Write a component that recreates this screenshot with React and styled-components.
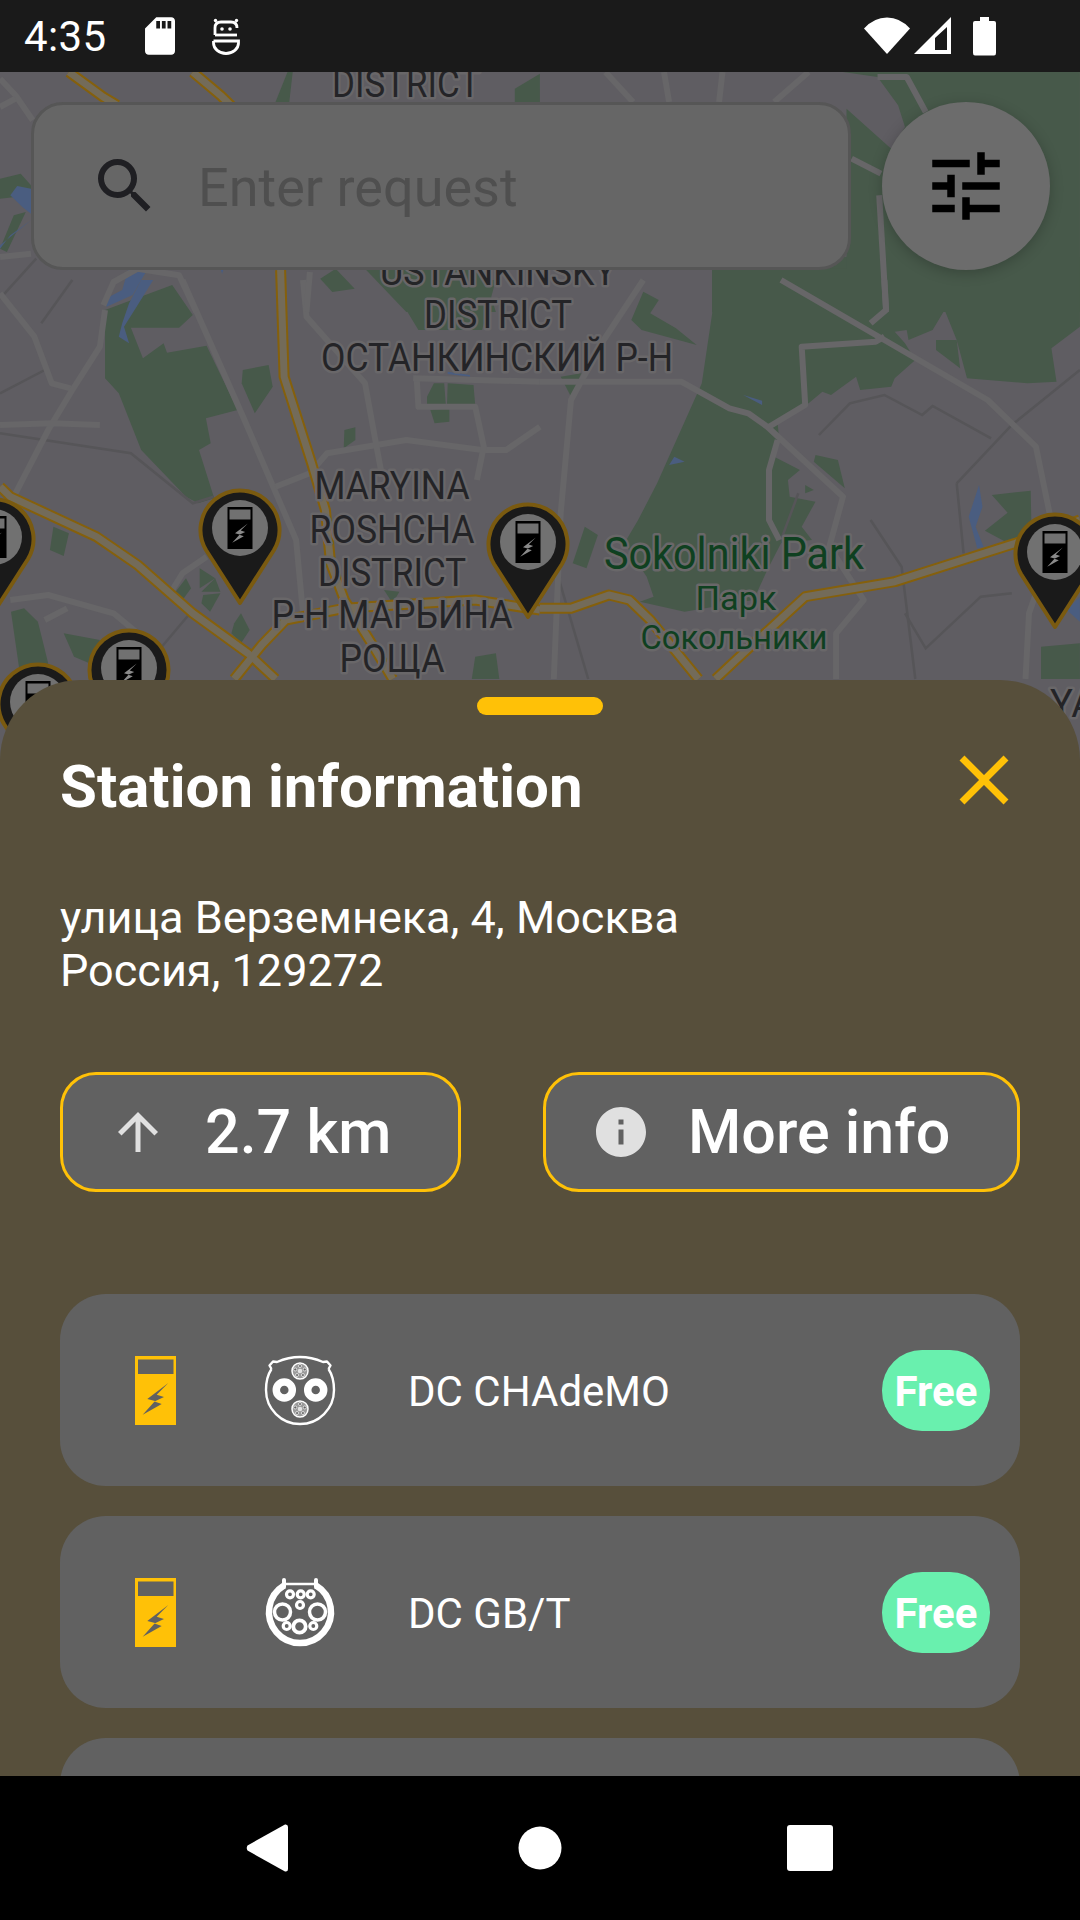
import React from 'react';
import styled, { createGlobalStyle } from 'styled-components';

const Global = createGlobalStyle`
  html, body { margin: 0; padding: 0; background: #000; }
  * { box-sizing: border-box; }
`;

const Screen = styled.div`
  width: 1080px; height: 1920px; display: flex; flex-direction: column; overflow: hidden;
  font-family: Roboto, sans-serif; color: #fff;
`;
const StatusBar = styled.div`
  height: 72px; flex: none; background: #1a1a1a; display: flex; align-items: center; justify-content: space-between;
  padding: 0 84px 0 24px;
`;
const StatusGroup = styled.div`display: flex; align-items: center; gap: ${p => p.$gap}px;`;
const Clock = styled.span`font-size: 42px; line-height: 72px; letter-spacing: 0.4px; margin-right: 10px; position: relative; top: 1px;`;

const Stage = styled.div`
  flex: 1; position: relative; display: flex; flex-direction: column; justify-content: space-between; overflow: hidden;
`;
const MapCanvas = styled.svg`position: absolute; left: 0; top: 0; width: 1080px; height: 720px; display: block;`;
const MapLabel = styled.text.attrs(p => ({ textLength: p.$len, lengthAdjust: 'spacingAndGlyphs' }))`
  font-family: Roboto, sans-serif; font-size: ${p => p.$size}px; fill: ${p => p.$fill};
  text-anchor: middle; stroke: #696769; stroke-width: 5px; paint-order: stroke; stroke-linejoin: round;
`;
const TopRow = styled.div`
  position: relative; display: flex; align-items: flex-start; gap: 32px; padding: 30px 30px 0 31px;
`;
const SearchBar = styled.div`
  width: 820px; height: 168px; background: #666; border: 3px solid #565656; border-radius: 32px;
  display: flex; align-items: center; padding-left: 55px; gap: 37px; flex: none;
`;
const Placeholder = styled.span`font-size: 54px; color: #4f4f4f; position: relative; top: 1px;`;
const FilterButton = styled.div`
  width: 168px; height: 168px; border-radius: 50%; background: #6c6c6c; flex: none; margin-left: -1px;
  display: flex; align-items: center; justify-content: center; box-shadow: 0 3px 14px rgba(0,0,0,.22);
`;

const Sheet = styled.div`
  position: relative; height: 1096px; background: #574f3b; border-radius: 80px 80px 0 0; padding: 17px 60px 0; overflow: hidden; flex: none;
`;
const Handle = styled.div`width: 126px; height: 18px; border-radius: 9px; background: #ffc107; margin: 0 auto;`;
const SheetHead = styled.div`display: flex; justify-content: space-between; align-items: flex-start; margin-top: 30px;`;
const Title = styled.h2`margin: 0; font-size: 60px; font-weight: 700; line-height: 84px; letter-spacing: 0;`;
const CloseIcon = styled.svg`width: 58px; height: 58px; margin: 6px 7px 0 0; display: block;`;
const Address = styled.p`margin: 62px 0 0; font-size: 45px; line-height: 53px;`;
const ActionRow = styled.div`display: flex; justify-content: space-between; margin-top: 75px;`;
const ActionButton = styled.div`
  width: ${p => p.$w}px; height: 120px; border: 3px solid #ffc107; border-radius: 36px; background: #616161;
  display: flex; align-items: center; padding-left: 45px; gap: 37px;
  font-size: 61px; font-weight: 500;
`;
const ButtonIcon = styled.svg`width: 60px; height: 60px; fill: #e0e0e0; flex: none; display: block;`;
const Cards = styled.div`display: flex; flex-direction: column; gap: 30px; margin-top: 102px;`;
const Card = styled.div`
  height: 192px; flex: none; border-radius: 46px; background: #616161; display: flex; align-items: center; padding: 0 30px 0 75px;
`;
const Station = styled.svg`width: 41px; height: 69px; flex: none; display: block;`;
const Plug = styled.svg`width: 70px; height: 70px; flex: none; margin: 0 74px 0 89px; display: block; overflow: visible;`;
const CardName = styled.span`flex: 1; font-size: 42px; margin-left: -1px; position: relative; top: 1px;`;
const FreeBadge = styled.span`
  width: 108px; height: 81px; border-radius: 40px; background: #69f0ae; display: flex; align-items: center; justify-content: center;
  font-size: 42px; font-weight: 700; padding-top: 2px;
`;
const NavBar = styled.div`height: 144px; flex: none; background: #000; display: flex; align-items: center;`;
const NavIcon = styled.svg`width: ${p => p.$w}px; height: 48px; margin-left: ${p => p.$ml}px; fill: #fff; display: block;`;

const z2 = pts => 'M' + pts.map(([x, y]) => `${(x / 2.904).toFixed(1)} ${(280 + y / 3 - 72).toFixed(1)}`).join('L');
const z3 = pts => 'M' + pts.map(([x, y]) => `${(540 + x / 2.904).toFixed(1)} ${(280 + y / 3 - 72).toFixed(1)}`).join('L');
const zl = pts => 'M' + pts.map(([x, y]) => `${(x / 2.904).toFixed(1)} ${(y / 3).toFixed(1)}`).join('L');
const zr = pts => 'M' + pts.map(([x, y]) => `${(540 + x / 2.904).toFixed(1)} ${(y / 3).toFixed(1)}`).join('L');

const parks = [
  z2([[305,90],[500,15],[560,105],[520,143],[380,143],[415,235],[475,190],[485,218],[600,197],[690,390],[598,415],[612,490],[578,510],[622,655],[575,670],[540,650],[410,510],[345,340],[305,295]]),
  z2([[705,270],[780,255],[792,320],[740,400],[702,310]]),
  zl([[930,620],[975,590],[1030,650],[965,660]]),
  zl([[1060,590],[1400,590],[1440,720],[1180,720]]),
  z2([[1180,90],[1100,0],[1440,0],[1400,150],[1215,150]]),
  z2([[1240,350],[1260,310],[1290,310],[1295,378],[1240,375]]),
  z2([[1300,310],[1375,315],[1380,375],[1298,375]]),
  z2([[1250,390],[1305,385],[1305,425],[1262,430]]),
  z2([[1000,450],[1032,442],[1032,480],[998,505]]),
  z2([[145,810],[155,740],[200,760],[185,828]]),
  z2([[32,995],[70,985],[110,1025],[140,1150],[100,1197],[60,1197]]),
  z2([[185,1060],[290,1080],[260,1150],[215,1130]]),
  z2([[580,865],[625,895],[580,925]]),
  z2([[625,895],[640,935],[585,935]]),
  z2([[590,945],[640,940],[610,995],[585,970]]),
  z2([[510,935],[540,895],[555,925],[530,960]]),
  z2([[700,1000],[725,1050],[700,1090],[672,1060],[680,1030]]),
  z2([[1115,930],[1160,935],[1140,970]]),
  z2([[1380,1130],[1440,1120],[1450,1197],[1370,1197]]),
  zl([[0,320],[60,305],[90,340],[90,370],[0,380]]),
  zl([[40,430],[75,420],[20,540],[0,530]]),
  zl([[800,90],[835,0],[850,0],[840,90]]),
  zl([[1495,50],[1568,5],[1568,90],[1495,90]]),
  z3([[500,-20],[500,100],[470,310],[340,610],[285,720],[245,790],[310,890],[330,950],[290,965],[420,995],[620,960],[660,870],[700,790],[670,720],[665,570],[695,480],[690,430],[780,370],[820,335],[845,345],[918,290],[930,330],[1020,320],[1030,295],[1090,240],[1060,190],[1030,155],[1065,150],[1070,180],[1140,150],[1175,90],[1210,180],[1240,295],[1415,310],[1500,305],[1485,205],[1568,140],[1568,-70],[500,-70]]),
  zr([[500,720],[500,590],[890,590],[890,110],[1020,230],[1060,165],[1040,100],[980,15],[880,0],[1568,0],[1568,720]]),
  z3([[680,530],[755,570],[720,600],[725,650],[800,665],[760,740],[790,780],[700,790],[670,720],[665,570]]),
  z3([[800,525],[865,540],[885,625],[795,545]]),
  z3([[1150,180],[1210,180],[1220,265],[1150,210]]),
  z3([[300,35],[345,60],[320,100],[395,145],[455,195],[295,150],[265,120]]),
  z3([[60,290],[120,280],[90,350]]),
  z3([[130,740],[168,765],[135,865],[95,850]]),
  z3([[770,615],[795,630],[770,640]]),
  z3([[1312,645],[1425,632],[1428,785],[1360,790],[1292,752],[1358,698]]),
  z3([[1455,1100],[1568,1090],[1568,1197],[1455,1197]]),
];
const water = [
  zl([[30,370],[50,342],[90,350],[90,425],[65,405]]),
  zl([[0,520],[90,445],[30,490],[0,530]]),
  z2([[310,80],[385,45],[410,0],[445,-60],[380,-60],[355,30],[300,60]]),
  z2([[410,0],[445,0],[400,75],[360,140],[375,190],[345,170],[355,130],[375,70]]),
  z2([[1300,275],[1365,285],[1365,290],[1300,282]]),
  z3([[590,345],[645,362],[645,375]]),
  z3([[375,555],[390,530],[420,545]]),
  z3([[1275,615],[1285,680],[1265,740],[1288,800],[1270,805],[1245,710]]),
  z3([[1530,990],[1568,950],[1568,1025]]),
  zl([[640,590],[650,590],[645,605]]),
];
const roads = [
  z2([[0,40],[100,170],[150,310],[205,325]]),
  z2([[305,90],[290,200],[210,330],[140,450],[40,650]]),
  z2([[0,435],[150,430],[290,435]]),
  z2([[530,0],[710,420],[860,780],[880,1000]]),
  z2([[800,620],[900,580],[950,520],[1180,480],[1400,510],[1470,510],[1568,440]]),
  z2([[880,0],[890,110],[1060,310],[1090,480],[1110,590]]),
  z2([[1210,295],[1215,380],[1380,380],[1405,500],[1385,600]]),
  z2([[1200,295],[1568,305]]),
  z3([[0,305],[410,305],[550,385],[605,400],[660,440],[880,650],[840,800],[940,960],[860,1060],[860,1197]]),
  z3([[300,0],[185,180],[90,360],[60,700],[40,1197]]),
  z3([[700,0],[1300,360],[1440,500],[1480,700],[1495,780],[1420,1000],[1410,1197]]),
  z3([[665,440],[770,375],[760,200],[975,185],[1000,170]]),
  z3([[690,480],[665,570],[665,720],[695,780]]),
  z2([[30,960],[140,945],[330,1000],[400,1060]]),
  z2([[130,1020],[195,985]]),
  z2([[500,930],[530,880],[600,830]]),
  zl([[0,20],[45,70],[95,145]]),
  zl([[0,105],[45,80]]),
  zl([[0,555],[90,545]]),
  zl([[300,700],[330,630],[400,590],[520,610],[570,720]]),
  zr([[190,0],[270,90]]),
  zr([[360,0],[375,90]]),
  zr([[530,0],[520,90]]),
  zr([[780,0],[680,90]]),
  zr([[980,15],[1065,15],[1120,120]]),
  zr([[905,260],[990,305]]),
  zr([[985,370],[1005,720]]),
  z3([[1000,0],[1005,90],[960,130]]),
  zl([[900,600],[890,720]]),
];
const thin = [
  z2([[0,460],[380,520],[560,670],[620,650]]),
  z2([[0,340],[130,270]]),
  z2([[120,130],[210,0]]),
  z2([[470,1100],[560,990]]),
  z3([[810,465],[900,370],[1000,345],[1110,405],[1140,378],[1310,475]]),
  z3([[1210,610],[1370,435],[1568,270]]),
  z3([[960,720],[1050,860],[1090,1197]]),
  z3([[1210,610],[1230,820]]),
  z3([[50,880],[140,1197]]),
  z3([[750,640],[700,780]]),
  z3([[1060,1000],[1120,1105],[1280,950],[1370,940]]),
  zl([[0,680],[105,560]]),
];
const highways = [
  z2([[815,-30],[825,290],[905,550],[945,690],[960,850],[1000,960],[1085,1100],[1140,1197]]),
  zl([[200,0],[300,75],[340,100]]),
  zl([[560,0],[640,70],[680,110]]),
  z2([[0,620],[30,650],[280,770],[400,855],[560,1000],[720,1120],[800,1197]]),
  z2([[680,1197],[760,1095],[830,1020],[1000,985],[1380,960],[1568,990]]),
  z3([[0,985],[90,985],[200,945],[260,960],[320,1020],[460,1197]]),
  z3([[510,1197],[590,1120],[770,950],[1030,905],[1380,790],[1568,720]]),
];

const labels = [
  [406, 25, 38, 148, 'DISTRICT'],
  [498, 213, 38, 236, 'USTANKINSKY'],
  [498, 256, 38, 148, 'DISTRICT'],
  [497, 299, 38, 352, 'ОСТАНКИНСКИЙ Р-Н'],
  [392, 427, 38, 155, 'MARYINA'],
  [392, 471, 38, 165, 'ROSHCHA'],
  [392, 514, 38, 148, 'DISTRICT'],
  [392, 556, 38, 241, 'Р-Н МАРЬИНА'],
  [392, 600, 38, 105, 'РОЩА'],
];

const BOLT = 'M33.3 27L12.3 43L20 45L7.7 58.7L26.7 48L19.5 45.5L29 41L21.7 38.7Z';

const Pin = ({ x, y }) => (
  <g transform={`translate(${x} ${y})`}>
    <path d="M0 114L-34 61A39.500 39.500 0 1 1 34 61Z" fill="#1a1a1a" stroke="#7a5a10" strokeWidth="4" strokeLinejoin="round" />
    <circle cx="0" cy="39" r="28" fill="#717171" />
    <g transform="translate(-12.5 18)">
      <rect width="25" height="42" fill="#000" />
      <rect x="2" y="2.5" width="21" height="10" fill="#717171" />
      <g transform="scale(.61)">
        <path d={BOLT} fill="#8a8a8a" />
      </g>
    </g>
  </g>
);

const MapBackground = () => (
  <MapCanvas viewBox="0 0 1080 720">
    <rect width="1080" height="720" fill="#5f5d62" />
    {parks.map((d, i) => <path key={i} d={d} fill="#47594a" />)}
    {water.map((d, i) => <path key={i} d={d} fill="#4a5d80" />)}
    {thin.map((d, i) => <path key={i} d={d} fill="none" stroke="#565558" strokeWidth="2.5" />)}
    {roads.map((d, i) => <path key={i} d={d} fill="none" stroke="#676668" strokeWidth="6" strokeLinejoin="round" />)}
    {highways.map((d, i) => <path key={i} d={d} fill="none" stroke="#85600c" strokeWidth="11" strokeLinejoin="round" />)}
    {highways.map((d, i) => <path key={i} d={d} fill="none" stroke="#736b59" strokeWidth="7" strokeLinejoin="round" />)}
    {labels.map(([x, y, size, len, text]) => (
      <MapLabel key={`${text}${y}`} x={x} y={y} $size={size} $len={len} $fill="#242427">{text}</MapLabel>
    ))}
    <MapLabel x="734" y="497" $size={44} $len={260} $fill="#0f4020">Sokolniki Park</MapLabel>
    <MapLabel x="736" y="538" $size={34} $len={81} $fill="#0f4020">Парк</MapLabel>
    <MapLabel x="734" y="577" $size={34} $len={187} $fill="#0f4020">Сокольники</MapLabel>
    <MapLabel x="1073" y="645" $size={38} $len={46} $fill="#242427">YA</MapLabel>
    <Pin x={240} y={417} />
    <Pin x={528} y={431} />
    <Pin x={1055} y={441} />
    <Pin x={-6} y={426} />
    <Pin x={129} y={557} />
    <Pin x={38} y={591} />
  </MapCanvas>
);

const StationIcon = () => (
  <Station viewBox="0 0 41 69">
    <rect width="41" height="69" fill="#ffc107" />
    <rect x="3" y="3.5" width="35.5" height="14.5" fill="#616161" />
    <path d={BOLT} fill="#616161" />
  </Station>
);

const Chademo = () => (
  <Plug viewBox="0 0 70 70">
    <path d="M6.500 14C2.500 20 1 27 1 35A34 34 0 0 0 69 35C69 27 67.500 20 63.500 14" fill="none" stroke="#fff" strokeWidth="2.400" />
    <path d="M6.500 14L4.500 10.500L8 6.500L12 7Q35 -3 58 7L62 6.500L65.500 10.500L63.500 14" fill="none" stroke="#fff" strokeWidth="2.400" strokeLinejoin="round" />
    <circle cx="19.300" cy="35" r="8" fill="none" stroke="#fff" strokeWidth="7.500" />
    <circle cx="50.700" cy="35" r="8" fill="none" stroke="#fff" strokeWidth="7.500" />
    {[16, 54].map(cy => (
      <g key={cy}>
        <circle cx="35" cy={cy} r="8" fill="#9a9a9a" stroke="#fff" strokeWidth="1.500" />
        {[0, 72, 144, 216, 288].map(a => (
          <circle key={a} cx={35 + 5 * Math.sin(a * Math.PI / 180)} cy={cy - 5 * Math.cos(a * Math.PI / 180)} r="1.500" fill="#616161" stroke="#fff" strokeWidth=".7" />
        ))}
        <circle cx="35" cy={cy} r="2.300" fill="#e4e4e4" />
      </g>
    ))}
  </Plug>
);

const GbT = () => (
  <Plug viewBox="0 0 70 70">
    <path d="M19 8.500A31 31 0 1 0 51 8.500" fill="none" stroke="#fff" strokeWidth="6.500" />
    <path d="M19 10L19 3M51 10L51 3" stroke="#fff" strokeWidth="4" strokeLinecap="round" />
    <path d="M19 7H51" stroke="#fff" strokeWidth="2.500" />
    <circle cx="17.500" cy="35" r="8" fill="none" stroke="#fff" strokeWidth="3.500" />
    <circle cx="52.500" cy="35" r="8" fill="none" stroke="#fff" strokeWidth="3.500" />
    <circle cx="34.500" cy="49.500" r="6.200" fill="none" stroke="#fff" strokeWidth="3.800" />
    {[[25, 17.300], [35.700, 17.300], [45.700, 17.300], [35, 28], [21.700, 49], [48.300, 49]].map(([cx, cy]) => (
      <circle key={`${cx}${cy}`} cx={cx} cy={cy} r="3.500" fill="none" stroke="#fff" strokeWidth="3.200" />
    ))}
  </Plug>
);

const connectors = [
  { name: 'DC CHAdeMO', Icon: Chademo },
  { name: 'DC GB/T', Icon: GbT },
  { name: '', Icon: null },
];

export default function App() {
  return (
    <Screen>
      <Global />
      <StatusBar>
        <StatusGroup $gap={28}>
          <Clock>4:35</Clock>
          <svg width="30" height="38" viewBox="4 2 16 20" fill="#fff" style={{ display: 'block' }}>
            <path d="M18 2h-8L4.020 8 4 20c0 1.100.9 2 2 2h12c1.100 0 2-.9 2-2V4c0-1.100-.9-2-2-2zm-6 6h-2V4h2v4zm3 0h-2V4h2v4zm3 0h-2V4h2v4z" />
          </svg>
          <svg width="28" height="38" viewBox="0 0 28 38" style={{ display: 'block', marginLeft: 9 }}>
            <g fill="none" stroke="#fff" strokeWidth="2.800">
              <path d="M3 18V11Q3 5 9 5H19Q25 5 25 11" />
              <path d="M3 18H25" />
              <path d="M1.500 24H26.500V26A12.500 10.500 0 0 1 1.500 26V24" />
            </g>
            <circle cx="10" cy="12" r="1.800" fill="#fff" />
            <circle cx="18" cy="12" r="1.800" fill="#fff" />
            <circle cx="3.500" cy="3.500" r="1.700" fill="#fff" />
            <circle cx="24.500" cy="3.500" r="1.700" fill="#fff" />
          </svg>
        </StatusGroup>
        <StatusGroup $gap={0}>
          <svg width="46" height="38" viewBox="0 0 46 38" fill="#fff" style={{ display: 'block' }}>
            <path d="M23 37L0 11.500Q10 .5 23 .5T46 11.500Z" />
          </svg>
          <svg width="38" height="38" viewBox="0 0 38 38" style={{ display: 'block', marginLeft: 4 }}>
            <path fillRule="evenodd" fill="#fff" d="M37 0V37H0ZM21 33H33V10L21 21Z" />
          </svg>
          <svg width="23" height="39" viewBox="0 0 23 39" fill="#fff" style={{ display: 'block', marginLeft: 21 }}>
            <path d="M7 0H16V4H21Q23 4 23 6V36Q23 38.500 21 38.500H2Q0 38.500 0 36V6Q0 4 2 4H7Z" />
          </svg>
        </StatusGroup>
      </StatusBar>

      <Stage>
        <MapBackground />
        <TopRow>
          <SearchBar>
            <svg width="72" height="72" viewBox="0 0 24 24" fill="#1f1f23" style={{ display: 'block', flex: 'none' }}>
              <path d="M15.500 14h-.79l-.28-.27A6.470 6.470 0 0 0 16 9.500 6.500 6.500 0 1 0 9.500 16c1.610 0 3.090-.59 4.230-1.570l.27.28v.79l5 4.990L20.490 19l-4.990-5zm-6 0C7.010 14 5 11.990 5 9.500S7.010 5 9.500 5 14 7.010 14 9.500 11.990 14 9.500 14z" />
            </svg>
            <Placeholder>Enter request</Placeholder>
          </SearchBar>
          <FilterButton>
            <svg width="90" height="90" viewBox="0 0 24 24" fill="#000" style={{ display: 'block' }}>
              <path d="M3 17v2h6v-2H3zM3 5v2h10V5H3zm10 16v-2h8v-2h-8v-2h-2v6h2zM7 9v2H3v2h4v2h2V9H7zm14 4v-2H11v2h10zm-6-4h2V7h4V5h-4V3h-2v6z" />
            </svg>
          </FilterButton>
        </TopRow>

        <Sheet>
          <Handle />
          <SheetHead>
            <Title>Station information</Title>
            <CloseIcon viewBox="0 0 58 58">
              <path d="M7 7L51 51M51 7L7 51" stroke="#ffc107" strokeWidth="7" fill="none" />
            </CloseIcon>
          </SheetHead>
          <Address>улица Верземнека, 4, Москва<br />Россия, 129272</Address>
          <ActionRow>
            <ActionButton $w={401}>
              <ButtonIcon viewBox="0 0 24 24"><path d="M4 12l1.410 1.410L11 7.830V20h2V7.830l5.580 5.590L20 12l-8-8-8 8z" /></ButtonIcon>
              <span>2.7 km</span>
            </ActionButton>
            <ActionButton $w={477}>
              <ButtonIcon viewBox="0 0 24 24"><path d="M12 2C6.480 2 2 6.480 2 12s4.480 10 10 10 10-4.480 10-10S17.520 2 12 2zm1 15h-2v-6h2v6zm0-8h-2V7h2v2z" /></ButtonIcon>
              <span>More info</span>
            </ActionButton>
          </ActionRow>
          <Cards>
            {connectors.map(({ name, Icon }) => (
              <Card key={name || 'next'}>
                {Icon && (
                  <>
                    <StationIcon />
                    <Icon />
                    <CardName>{name}</CardName>
                    <FreeBadge>Free</FreeBadge>
                  </>
                )}
              </Card>
            ))}
          </Cards>
        </Sheet>
      </Stage>

      <NavBar>
        <NavIcon $w={42} $ml={246} viewBox="0 0 42 48"><path d="M39 .5Q42 0 42 3V45Q42 48 39 47.500L1.500 26.500Q0 24 1.500 21.500Z" /></NavIcon>
        <NavIcon $w={44} $ml={230} viewBox="0 0 44 48"><circle cx="22" cy="24" r="21.500" /></NavIcon>
        <NavIcon $w={46} $ml={225} viewBox="0 0 46 48"><rect x="0" y="1" width="46" height="46" rx="3" /></NavIcon>
      </NavBar>
    </Screen>
  );
}
